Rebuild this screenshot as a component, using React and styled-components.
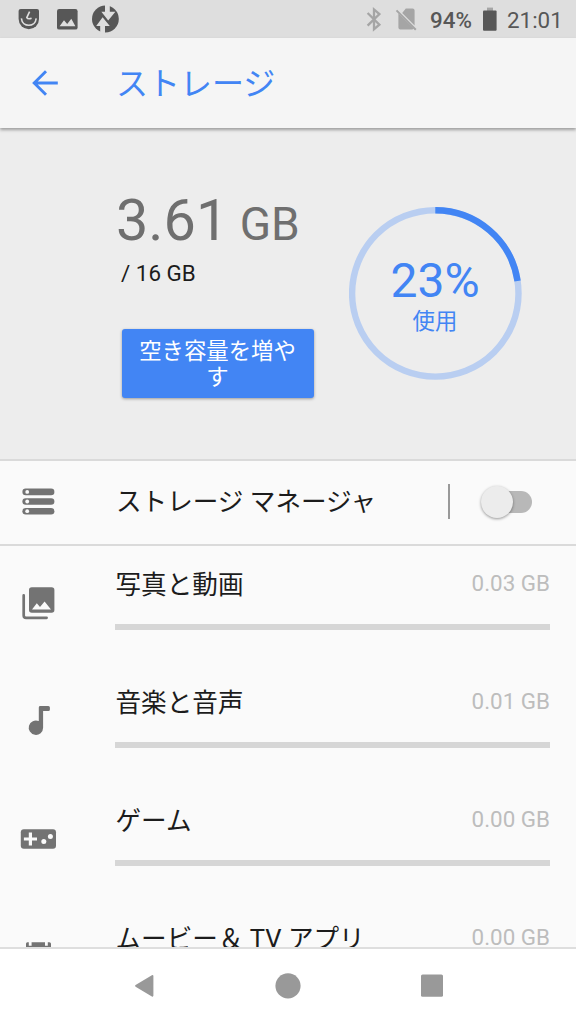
import { useState } from "react";
import styled, { createGlobalStyle } from "styled-components";

const GlobalStyle = createGlobalStyle`
  body {
    margin: 0;
    background: #fafafa;
    font-family: Roboto, "Noto Sans CJK JP", sans-serif;
  }
  * {
    box-sizing: border-box;
  }
`;

const Screen = styled.div`
  display: flex;
  flex-direction: column;
  width: 576px;
  height: 1024px;
  overflow: hidden;
  background: #fafafa;
  color: #1c1c1c;
`;

const StatusBar = styled.div`
  display: flex;
  justify-content: space-between;
  flex: none;
  height: 38px;
  background: #dedede;
  color: #575757;
`;
const StatusGroup = styled.div`
  display: flex;
  align-items: center;
`;
const StatusIcon = styled.svg`
  display: block;
  flex: none;
  margin-left: ${(p) => p.$gap || 0}px;
`;
const BatteryPercent = styled.div`
  width: 42px;
  margin-left: 12px;
  padding-top: 2px;
  font-size: 22.4px;
  font-weight: 500;
  line-height: 28px;
  white-space: nowrap;
`;
const Clock = styled.div`
  width: 69px;
  margin-left: 10px;
  padding-top: 2px;
  font-size: 22.4px;
  line-height: 28px;
`;

const AppBar = styled.header`
  display: flex;
  align-items: center;
  flex: none;
  z-index: 1;
  height: 90px;
  background: #f5f5f5;
  color: #4285f4;
  box-shadow: 0 2px 3px rgba(0, 0, 0, 0.34);
`;
const BackButton = styled.button`
  display: flex;
  width: 116px;
  padding: 0 0 0 32px;
  border: 0;
  background: none;
  color: inherit;
`;
const Title = styled.h1`
  margin: 0;
  padding-top: 2px;
  font-size: 32px;
  font-weight: 400;
  line-height: 48px;
`;

const Summary = styled.section`
  display: flex;
  flex: none;
  height: 333px;
  padding-left: 116px;
  border-bottom: 2px solid #dadada;
  background: #ededed;
`;
const Usage = styled.div`
  width: 233px;
  padding-top: 59px;
`;
const UsedSize = styled.div`
  font-size: 57.6px;
  line-height: 68px;
  color: #6f6f6f;
  white-space: nowrap;
`;
const Unit = styled.span`
  font-size: 46px;
`;
const TotalSize = styled.div`
  margin: 1px 0 0 5px;
  font-size: 22.4px;
  line-height: 28px;
`;
const FreeUpButton = styled.button`
  display: block;
  width: 192px;
  height: 69px;
  margin: 42px 0 0 6px;
  padding: 1px 13px 0 12px;
  border: 0;
  border-radius: 3px;
  background: #4285f4;
  box-shadow: 0 1px 3px rgba(0, 0, 0, 0.35);
  color: #fff;
  font-family: inherit;
  font-size: 22.4px;
  line-height: 26px;
`;
const Donut = styled.div`
  display: grid;
  width: 173px;
  height: 173px;
  margin-top: 79px;
  color: #4285f4;
  > * {
    grid-area: 1 / 1;
  }
`;
const DonutLabel = styled.div`
  display: flex;
  flex-direction: column;
  align-items: center;
  padding: 46px 1px 0 0;
`;
const Percent = styled.div`
  font-size: 48px;
  line-height: 55px;
`;
const Caption = styled.div`
  font-size: 22.4px;
  line-height: 26px;
`;

const ManagerRow = styled.section`
  display: flex;
  align-items: center;
  flex: none;
  height: 85px;
  padding-bottom: 2px;
  border-bottom: 2px solid #dadada;
`;
const IconCell = styled.div`
  flex: none;
  width: 115px;
  padding-left: 19px;
  svg {
    display: block;
  }
`;
const Label = styled.div`
  flex: 1;
  font-size: 25.6px;
  line-height: 38px;
  white-space: nowrap;
`;
const ManagerLabel = styled(Label)`
  padding: 1px 0 0 1px;
`;
const Separator = styled.div`
  width: 2px;
  height: 35px;
  background: #999;
`;
const Switch = styled.button`
  display: flex;
  align-items: center;
  justify-content: ${(p) => (p.$on ? "flex-end" : "flex-start")};
  width: 48px;
  height: 22px;
  margin: 0 44px 0 34px;
  padding: 0;
  border: 0;
  border-radius: 11px;
  background: ${(p) => (p.$on ? "#a1c2fa" : "#b8b8b8")};
`;
const Thumb = styled.span`
  width: 32px;
  height: 32px;
  margin-left: -3px;
  border-radius: 50%;
  background: ${(p) => (p.$on ? "#4285f4" : "#ececec")};
  box-shadow: 0 1px 3px rgba(0, 0, 0, 0.4);
`;

const List = styled.main`
  flex: 1;
  min-height: 0;
  overflow: hidden;
`;
const Item = styled.div`
  display: flex;
  height: 118px;
  padding-right: 26px;
  ${IconCell} {
    padding-top: 38px;
  }
`;
const ItemBody = styled.div`
  flex: 1;
`;
const ItemHead = styled.div`
  display: flex;
  padding: 20px 0 0 0.5px;
`;
const Size = styled.div`
  font-size: 22.4px;
  line-height: 34px;
  color: #bdbdbd;
`;
const Track = styled.div`
  height: 6px;
  margin-top: 20px;
  background: #d6d6d6;
`;

const NavBar = styled.nav`
  display: flex;
  justify-content: center;
  gap: 106px;
  flex: none;
  height: 77px;
  border-top: 2px solid #dedede;
  background: #fff;
  svg {
    display: block;
    margin-top: 18px;
  }
`;

const GREY = "#737373";

const StorageIcon = () => (
  <svg width="38" height="38" fill={GREY}>
    {[5.6, 15.2, 24.9].map((y) => (
      <g key={y}>
        <rect x="3.4" y={y} width="32" height="6.6" rx="3.3" />
        <circle cx="8.2" cy={y + 3.3} r="1.9" fill="#fafafa" />
      </g>
    ))}
  </svg>
);

const PhotosIcon = () => (
  <svg width="38" height="38" fill={GREY}>
    <rect x="10" y="3.2" width="25.4" height="25.6" rx="2.8" />
    <path d="M13 25.6 17.8 19.2 21 23 25.6 17.6 32 25.6Z" fill="#fafafa" />
    <path
      d="M4.7 11.4V31.4Q4.7 33.8 7.1 33.8H27.6"
      fill="none"
      stroke={GREY}
      strokeWidth="2.7"
      strokeLinecap="round"
    />
  </svg>
);

const MusicIcon = () => (
  <svg width="38" height="38" fill={GREY}>
    <path d="M19.8 5.4Q19.8 4 21.3 4H29.4Q30.9 4 30.9 5.5V7.6Q30.9 9.1 29.4 9.1H24.1V25.7A7.2 7.2 0 1 1 19.8 19.1Z" />
  </svg>
);

const GameIcon = () => (
  <svg width="38" height="38">
    <rect x="1.8" y="9.3" width="35.2" height="19.4" rx="3" fill={GREY} />
    <g fill="#fafafa">
      <path d="M9.8 12.6h3.2v4.8h5v3.2h-5v4.8H9.8v-4.8H4.9v-3.2h4.9z" />
      <circle cx="24.8" cy="21.6" r="2.5" />
      <circle cx="31.4" cy="16.6" r="2.5" />
    </g>
  </svg>
);

const MovieIcon = () => (
  <svg width="38" height="38" fill={GREY}>
    <path d="M8.4 4.2H9.8V7.8H12.6V4.2H26V7.8H28.8V4.2H30.4Q32 4.2 32 5.8V34H7V5.8Q7 4.2 8.4 4.2Z" />
  </svg>
);

const categories = [
  { name: "写真と動画", size: "0.03 GB", Icon: PhotosIcon },
  { name: "音楽と音声", size: "0.01 GB", Icon: MusicIcon },
  { name: "ゲーム", size: "0.00 GB", Icon: GameIcon },
  { name: "ムービー＆ TV アプリ", size: "0.00 GB", Icon: MovieIcon },
];

const StatusIcons = () => (
  <StatusBar>
    <StatusGroup>
      <StatusIcon $gap={18} width="22" height="38">
        <path
          d="M2.8 9H19Q21 9 21 11V19A10.2 10.2 0 0 1 .6 19V11Q.6 9 2.8 9Z"
          fill="#575757"
        />
        <path
          d="M11.6 11.6 8.8 17.6Q9.8 19.6 13.6 18.3M3.4 18.4C4.2 27.6 17.4 27.6 18.2 18.4"
          fill="none"
          stroke="#dedede"
          strokeWidth="1.6"
        />
      </StatusIcon>
      <StatusIcon $gap={17} width="21" height="38">
        <rect x="0" y="9" width="20.6" height="20.6" rx="2.2" fill="#575757" />
        <path d="M2.6 26.2 7 20.3 10.2 24 14.3 18.8 18.4 26.2Z" fill="#dedede" />
      </StatusIcon>
      <StatusIcon $gap={14} width="27" height="38">
        <circle cx="13.4" cy="19" r="13.4" fill="#575757" />
        <g fill="#dedede">
          <path d="M13 5H17.8V11.8H23.4L16.2 20.5 9.4 11.8H13Z" />
          <path d="M8.2 33V26H4.2L10.6 17.3 17.8 26H13V33Z" />
        </g>
      </StatusIcon>
    </StatusGroup>
    <StatusGroup>
      <StatusIcon width="16" height="38">
        <path
          d="M1.6 13 13.4 24.6 8 29.2V9.4L13.4 14 1.6 25.6"
          fill="none"
          stroke="#a5a5a5"
          strokeWidth="2.3"
        />
      </StatusIcon>
      <StatusIcon $gap={13} width="23" height="38">
        <path
          d="M10.8 8.6H17.5Q19.6 8.6 19.6 10.6V25.6L7.2 13ZM3.4 13.4 18.6 28.6Q18 29.6 17 29.6H5.4Q3.4 29.6 3.4 27.6Z"
          fill="#a5a5a5"
        />
        <path d="M1.5 10.4 20.8 29.8" stroke="#a5a5a5" strokeWidth="2" />
      </StatusIcon>
      <BatteryPercent>94%</BatteryPercent>
      <StatusIcon $gap={11} width="14" height="38">
        <rect x="4" y="7.6" width="6" height="4" fill="#a5a5a5" />
        <rect x="0" y="10.4" width="13.6" height="20.4" rx="1" fill="#575757" />
      </StatusIcon>
      <Clock>21:01</Clock>
    </StatusGroup>
  </StatusBar>
);

const App = () => {
  const [managerOn, setManagerOn] = useState(false);

  return (
    <Screen>
      <GlobalStyle />
      <StatusIcons />
      <AppBar>
        <BackButton aria-label="戻る">
          <svg width="26" height="26" fill="none" stroke="#4285f4" strokeWidth="2.9">
            <path d="M25.8 13H2M14 1.2 2.2 13 14 24.8" />
          </svg>
        </BackButton>
        <Title>ストレージ</Title>
      </AppBar>
      <Summary>
        <Usage>
          <UsedSize>
            3.61<Unit> GB</Unit>
          </UsedSize>
          <TotalSize>/ 16 GB</TotalSize>
          <FreeUpButton>空き容量を増やす</FreeUpButton>
        </Usage>
        <Donut>
          <svg width="173" height="173" fill="none" strokeWidth="6.4">
            <circle cx="86.3" cy="86.4" r="83.2" stroke="#b9cef1" />
            <circle
              cx="86.3"
              cy="86.4"
              r="83.2"
              stroke="#4285f4"
              pathLength="100"
              strokeDasharray="22.6 77.4"
              transform="rotate(-90 86.3 86.4)"
            />
          </svg>
          <DonutLabel>
            <Percent>23%</Percent>
            <Caption>使用</Caption>
          </DonutLabel>
        </Donut>
      </Summary>
      <ManagerRow>
        <IconCell>
          <StorageIcon />
        </IconCell>
        <ManagerLabel>ストレージ マネージャ</ManagerLabel>
        <Separator />
        <Switch
          $on={managerOn}
          aria-label="ストレージ マネージャ"
          onClick={() => setManagerOn(!managerOn)}
        >
          <Thumb $on={managerOn} />
        </Switch>
      </ManagerRow>
      <List>
        {categories.map(({ name, size, Icon }) => (
          <Item key={name}>
            <IconCell>
              <Icon />
            </IconCell>
            <ItemBody>
              <ItemHead>
                <Label>{name}</Label>
                <Size>{size}</Size>
              </ItemHead>
              <Track />
            </ItemBody>
          </Item>
        ))}
      </List>
      <NavBar>
        <svg width="38" height="38">
          <path
            d="M27.4 9 11.1 18.8 27.4 28.6Z"
            fill="#999"
            stroke="#999"
            strokeWidth="2"
            strokeLinejoin="round"
          />
        </svg>
        <svg width="38" height="38">
          <circle cx="19" cy="18.8" r="12.6" fill="#999" />
        </svg>
        <svg width="38" height="38">
          <rect x="8" y="7.4" width="22" height="22.4" rx="1.6" fill="#999" />
        </svg>
      </NavBar>
    </Screen>
  );
};

export default App;
